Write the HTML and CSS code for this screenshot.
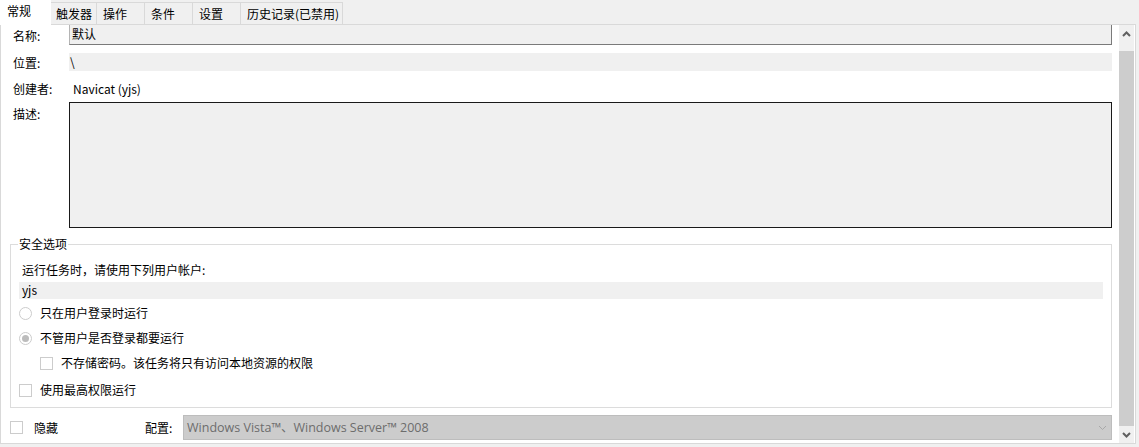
FILE: index.html
```html
<!DOCTYPE html>
<html lang="zh-CN">
<head>
    <meta charset="UTF-8">
    <title>任务属性 - 常规</title>
    <link rel="stylesheet" href="styles.css">
</head>
<body>
    <div class="tabs">
        <div class="tab active">常规</div>
        <div class="tab">触发器</div>
        <div class="tab">操作</div>
        <div class="tab">条件</div>
        <div class="tab">设置</div>
        <div class="tab">历史记录(已禁用)</div>
    </div>

    <div class="panel">
        <div class="form">
            <div class="row row-name">
                <span class="label">名称:</span>
                <div class="field name-field">默认</div>
            </div>
            <div class="row row-path">
                <span class="label">位置:</span>
                <div class="field path-field">\</div>
            </div>
            <div class="row row-author">
                <span class="label">创建者:</span>
                <div class="field author-field">Navicat (yjs)</div>
            </div>
            <div class="row row-desc">
                <span class="label">描述:</span>
                <div class="field desc-field"></div>
            </div>

            <fieldset class="group">
                <legend>安全选项</legend>
                <div class="hint">运行任务时，请使用下列用户帐户:</div>
                <div class="user">yjs</div>
                <div class="opt opt-1"><span class="radio"></span>只在用户登录时运行</div>
                <div class="opt opt-2"><span class="radio checked"></span>不管用户是否登录都要运行</div>
                <div class="opt opt-3 sub"><span class="check"></span>不存储密码。该任务将只有访问本地资源的权限</div>
                <div class="opt opt-4"><span class="check"></span>使用最高权限运行</div>
            </fieldset>

            <div class="bottom">
                <div class="opt hide-opt"><span class="check"></span>隐藏</div>
                <span class="cfg-label">配置:</span>
                <div class="select">
                    <span>Windows Vista™、Windows Server™ 2008</span>
                    <svg width="9" height="6" viewBox="0 0 9 6"><path d="M1 1 L4.5 4.5 L8 1" fill="none" stroke="#a8a8a8" stroke-width="1"/></svg>
                </div>
            </div>
        </div>

        <div class="scrollbar">
            <div class="sb-btn">
                <svg width="9" height="6" viewBox="0 0 9 6"><path d="M1 5 L4.5 1.5 L8 5" fill="none" stroke="#606060" stroke-width="2"/></svg>
            </div>
            <div class="sb-track"><div class="sb-thumb"></div></div>
            <div class="sb-btn">
                <svg width="9" height="6" viewBox="0 0 9 6"><path d="M1 1 L4.5 4.5 L8 1" fill="none" stroke="#606060" stroke-width="2"/></svg>
            </div>
        </div>
    </div>
</body>
</html>
```

FILE: styles.css
```css
html, body { margin: 0; width: 1139px; height: 447px; overflow: hidden; }
body { background: #f0f0f0; color: #000; font-family: "Noto Sans CJK SC", "Noto Sans", sans-serif; font-size: 12px; line-height: 16px; }

.tabs { display: flex; align-items: flex-end; height: 24px; }
.tab { height: 21px; line-height: 21px; padding-left: 6px; border: 1px solid #d9d9d9; border-bottom: none; border-left: none; background: #f0f0f0; box-sizing: border-box; height: 22px; }
.tab:nth-child(2) { width: 46px; padding-left: 5px; }
.tab:nth-child(3) { width: 48px; }
.tab:nth-child(4) { width: 48px; }
.tab:nth-child(5) { width: 48px; }
.tab:nth-child(6) { width: 102px; }
.tab.active { width: 51px; height: 25px; line-height: 22px; background: #fff; border: none; padding-left: 7px; margin-bottom: -1px; position: relative; z-index: 1; }

.panel { display: flex; width: 1136px; height: 420px; box-sizing: border-box; border: 1px solid #d9d9d9; background: #fff; }
.form { flex: 1; padding-right: 7px; }

.row { display: flex; }
.label { width: 56px; padding-left: 12px; flex: none; }
.field { flex: 1; }

.row-name { height: 19px; align-items: center; }
.row-name .label { padding-top: 3px; }
.name-field { height: 19px; line-height: 18px; background: #f0f0f0; border-left: 1px solid #b4b4b4; border-right: 1px solid #7a7a7a; border-bottom: 1px solid #7a7a7a; padding-left: 2px; }

.row-path { margin-top: 9px; height: 18px; align-items: center; }
.row-path .label { padding-top: 2px; }
.path-field { height: 18px; line-height: 17px; background: #f0f0f0; padding-left: 1px; }

.row-author { margin-top: 9px; height: 18px; align-items: center; }
.author-field { padding-left: 4px; }

.row-desc { margin-top: 4px; }
.row-desc .label { padding-top: 4px; }
.desc-field { height: 126px; box-sizing: border-box; border: 1px solid #1a1a1a; background: #f0f0f0; }

.group { margin: 8px 0 0 9px; padding: 0 8px 9px 8px; border: 1px solid #dcdcdc; }
.group legend { margin-left: -1px; padding: 0 1px; }
.hint { margin-top: 10px; padding-left: 3px; }
.user { margin-top: 4px; height: 17px; line-height: 16px; background: #f0f0f0; padding-left: 3px; }

.opt { display: flex; align-items: center; height: 16px; }
.opt-1 { margin-top: 6px; }
.opt-2 { margin-top: 9px; }
.opt-3 { margin-top: 9px; }
.opt-4 { margin-top: 11px; }
.sub { padding-left: 21px; }

.radio { width: 13px; height: 13px; box-sizing: border-box; border: 1px solid #cccccc; border-radius: 50%; margin-right: 8px; display: flex; align-items: center; justify-content: center; }
.radio.checked::after { content: ""; width: 7px; height: 7px; border-radius: 50%; background: #bcbcbc; }
.check { width: 13px; height: 13px; box-sizing: border-box; border: 1px solid #cccccc; margin-right: 8px; }
.sub .check { margin-right: 8px; }

.bottom { display: flex; align-items: center; margin-top: 7px; padding-left: 9px; }
.hide-opt .check { margin-right: 11px; }
.cfg-label { margin-left: 87px; width: 38px; }
.select { flex: 1; height: 25px; box-sizing: border-box; border: 1px solid #bdbdbd; background: #cccccc; color: #6d6d6d; font-family: "Open Sans", "Noto Sans CJK SC", sans-serif; font-size: 12.5px; display: flex; align-items: center; justify-content: space-between; padding: 0 4px 0 3px; }

.scrollbar { width: 15px; margin-right: 1px; display: flex; flex-direction: column; background: #f0f0f0; }
.sb-btn { height: 17px; display: flex; align-items: center; justify-content: center; flex: none; }
.sb-track { flex: 1; padding-top: 9px; display: flex; }
.sb-thumb { flex: 1; background: #cdcdcd; }
```
